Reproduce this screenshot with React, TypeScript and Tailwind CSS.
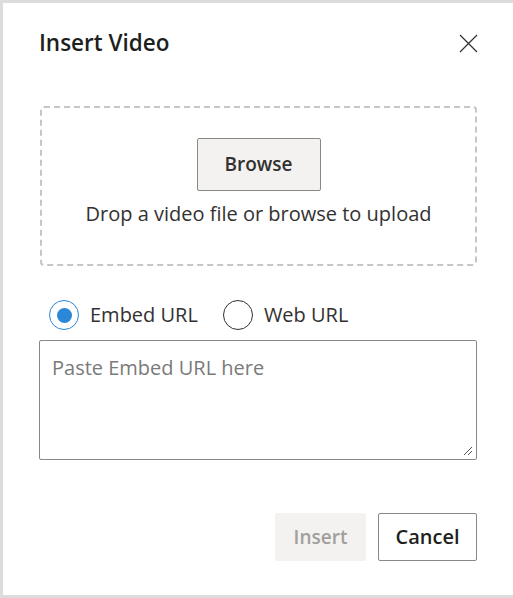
import React from "react"

export default function App() {
  return (
    <div
      className="w-[513px] h-[598px] bg-[#dcdcdc] pt-[3px] pl-[3px] overflow-hidden"
      style={{ fontFamily: '"Open Sans", "Noto Sans", sans-serif' }}
    >
      <div className="w-[510px] h-[592px] bg-white flex flex-col pl-[36px] pr-[36px]">
        {/* Header */}
        <div className="flex items-center justify-between pt-[21px] h-[60px]">
          <h1 className="text-[22.5px] font-semibold text-[#201f1e] leading-none">Insert Video</h1>
          <button className="w-[20px] h-[20px] flex items-center justify-center text-[#323130] mr-[-1px] mt-[-1px]">
            <svg width="19" height="19" viewBox="0 0 19 19" fill="none" stroke="currentColor" strokeWidth="1.2">
              <path d="M1 1L18 18M18 1L1 18" />
            </svg>
          </button>
        </div>

        {/* Drop zone */}
        <div className="mt-[43px] ml-[1px] h-[160px] border-2 border-dashed border-[#c8c6c4] rounded-[4px] flex flex-col items-center pt-[30px]">
          <button className="w-[124px] h-[53px] bg-[#f3f2f1] border border-[#8a8886] rounded-[2px] text-[19px] font-semibold text-[#323130]">
            Browse
          </button>
          <p className="mt-[9px] text-[20px] text-[#323130] leading-[28px]">Drop a video file or browse to upload</p>
        </div>

        {/* Radios */}
        <div className="flex items-center mt-[34px] ml-[10px] h-[30px]">
          <label className="flex items-center">
            <span className="w-[30px] h-[30px] rounded-full border border-[#2b88d8] flex items-center justify-center">
              <span className="w-[15px] h-[15px] rounded-full bg-[#2b88d8]" />
            </span>
            <span className="ml-[11px] text-[20px] text-[#323130]">Embed URL</span>
          </label>
          <label className="flex items-center ml-[25px]">
            <span className="w-[30px] h-[30px] rounded-full border border-[#323130]" />
            <span className="ml-[11px] text-[20px] text-[#323130]">Web URL</span>
          </label>
        </div>

        {/* Textarea */}
        <div className="relative mt-[10px] h-[120px] border border-[#8a8886] rounded-[2px] px-[12px] pt-[13px]">
          <span className="text-[20px] text-[#7a7a7a] leading-[28px]">Paste Embed URL here</span>
          <svg className="absolute right-[3px] bottom-[3px]" width="10" height="10" viewBox="0 0 10 10" stroke="#555" strokeWidth="1">
            <path d="M9 1L1 9M9 5L5 9" />
          </svg>
        </div>

        {/* Footer */}
        <div className="flex justify-end gap-[12px] mt-[53px]">
          <button className="w-[91px] h-[48px] bg-[#f3f2f1] rounded-[2px] text-[19px] font-semibold text-[#a19f9d]">
            Insert
          </button>
          <button className="w-[99px] h-[48px] bg-white border border-[#8a8886] rounded-[2px] text-[20px] font-semibold text-[#201f1e]">
            Cancel
          </button>
        </div>
      </div>
    </div>
  )
}
